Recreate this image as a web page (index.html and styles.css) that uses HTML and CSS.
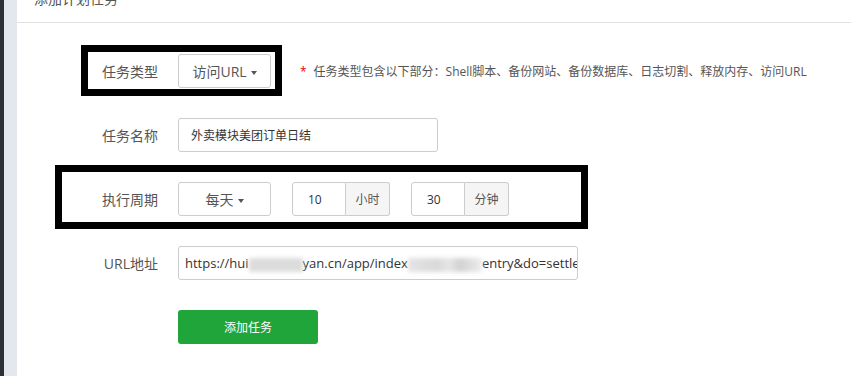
FILE: index.html
```html
<!DOCTYPE html>
<html lang="zh-CN">
<head>
    <meta charset="UTF-8">
    <meta name="viewport" content="width=device-width, initial-scale=1.0">
    <title>添加计划任务</title>
    <link rel="stylesheet" href="styles.css">
</head>
<body>
    <div class="layout">
        <aside class="sidebar"></aside>
        <div class="gutter"></div>
        <main class="panel">
            <div class="panel-head">
                <h2>添加计划任务</h2>
            </div>

            <form class="task-form">
                <div class="form-row">
                    <span class="mark mark-type"></span>
                    <label class="form-label">任务类型</label>
                    <button type="button" class="dropdown">访问URL<span class="caret"></span></button>
                    <span class="hint"><em>*</em>任务类型包含以下部分：Shell脚本、备份网站、备份数据库、日志切割、释放内存、访问URL</span>
                </div>

                <div class="form-row">
                    <label class="form-label">任务名称</label>
                    <input class="form-control name-input" type="text" value="外卖模块美团订单日结">
                </div>

                <div class="form-row">
                    <span class="mark mark-cycle"></span>
                    <label class="form-label">执行周期</label>
                    <button type="button" class="dropdown">每天<span class="caret"></span></button>
                    <div class="input-group">
                        <input class="form-control num-input" type="text" value="10">
                        <span class="addon">小时</span>
                    </div>
                    <div class="input-group">
                        <input class="form-control num-input" type="text" value="30">
                        <span class="addon">分钟</span>
                    </div>
                </div>

                <div class="form-row">
                    <label class="form-label">URL地址</label>
                    <div class="form-control url-input">https://hui<span class="blur blur-a"></span>yan.cn/app/index<span class="blur blur-b"></span>entry&amp;do=settlement</div>
                </div>

                <div class="form-row">
                    <span class="form-label"></span>
                    <button type="button" class="btn-submit">添加任务</button>
                </div>
            </form>
        </main>
    </div>
</body>
</html>
```

FILE: styles.css
```css
body {
    margin: 0;
    font-family: "Open Sans", "Noto Sans CJK SC", sans-serif;
    color: #555;
    background-color: #fff;
}
.layout {
    display: flex;
    height: 100vh;
    overflow: hidden;
}
.sidebar {
    width: 4px;
    background-color: #2c3138;
}
.gutter {
    width: 13px;
    background-color: #e4e7eb;
}
.panel {
    flex: 1;
    background-color: #fff;
}
.panel-head {
    height: 22px;
    border-bottom: 1px solid #e2e2e2;
    padding-left: 17px;
    overflow: hidden;
}
.panel-head h2 {
    margin: -8px 0 0;
    font-size: 14px;
    line-height: 14px;
    font-weight: normal;
    color: #555;
}
.task-form {
    padding-top: 31px;
}
.form-row {
    position: relative;
    display: flex;
    align-items: center;
    height: 34px;
    margin-bottom: 30px;
}
.form-label {
    width: 141px;
    margin-right: 20px;
    text-align: right;
    font-size: 14px;
    color: #555;
}
.mark {
    position: absolute;
    border: 7px solid #000;
    box-sizing: border-box;
}
.mark-type {
    left: 64px;
    top: -9px;
    width: 201px;
    height: 51px;
}
.mark-cycle {
    left: 38px;
    top: -17px;
    width: 533px;
    height: 64px;
}
.dropdown {
    width: 93px;
    height: 34px;
    padding: 0;
    border: 1px solid #ccc;
    border-radius: 3px;
    background-color: #fff;
    font-family: inherit;
    font-size: 14px;
    color: #555;
    display: flex;
    align-items: center;
    justify-content: center;
}
.caret {
    display: inline-block;
    margin-left: 4px;
    margin-top: 3px;
    border-top: 4px solid #555;
    border-left: 3.5px solid transparent;
    border-right: 3.5px solid transparent;
}
.hint {
    margin-left: 29px;
    font-size: 12px;
    color: #555;
}
.hint em {
    font-style: normal;
    color: #e00;
    margin-right: 7px;
}
.form-control {
    height: 34px;
    box-sizing: border-box;
    border: 1px solid #ccc;
    border-radius: 3px;
    background-color: #fff;
    font-family: inherit;
    color: #333;
    outline: none;
}
.name-input {
    width: 260px;
    padding: 0 12px;
    font-size: 12px;
}
.url-input {
    width: 400px;
    padding: 0 6px;
    font-size: 13px;
    line-height: 32px;
    white-space: nowrap;
    overflow: hidden;
}
.blur {
    display: inline-block;
    height: 14px;
    vertical-align: middle;
    filter: blur(2px);
}
.blur-a {
    width: 54px;
    background-color: #dcdcdc;
}
.blur-b {
    width: 74px;
    background: linear-gradient(90deg, #e4e4e4 0%, #d9d9d9 40%, #e6e6e6 55%, #d2d2d2 70%, #ececec 100%);
}
.input-group {
    display: flex;
    margin-left: 21px;
}
.num-input {
    width: 54px;
    padding: 0 15px;
    font-size: 12px;
    border-radius: 3px 0 0 3px;
}
.addon {
    width: 44px;
    height: 34px;
    box-sizing: border-box;
    border: 1px solid #ccc;
    border-left: none;
    border-radius: 0 3px 3px 0;
    background-color: #f5f5f5;
    font-size: 12px;
    color: #555;
    display: flex;
    align-items: center;
    justify-content: center;
}
.btn-submit {
    width: 140px;
    height: 34px;
    border: none;
    border-radius: 3px;
    background-color: #20a53a;
    color: #fff;
    font-family: inherit;
    font-size: 12px;
}
```
